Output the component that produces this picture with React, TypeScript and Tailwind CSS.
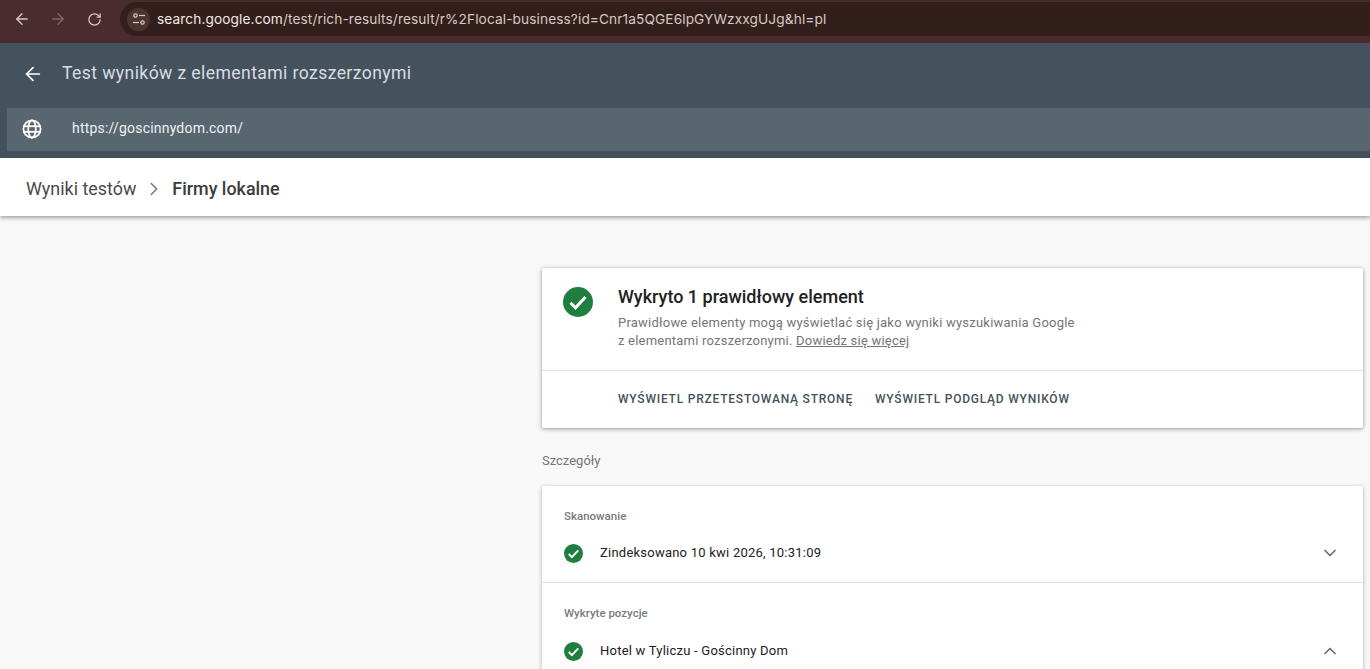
import { ArrowLeft, ArrowRight, ChevronDown, ChevronRight, ChevronUp, RotateCw } from "lucide-react";

function CheckBadge({ size }: { size: number }) {
  return (
    <svg width={size} height={size} viewBox="0 0 24 24" className="shrink-0">
      <circle cx="12" cy="12" r="12" fill="#1e7e3e" />
      <path d="M6 12.6l4 4 8-8.6" fill="none" stroke="#fff" strokeWidth="2.4" />
    </svg>
  );
}

function TuneIcon() {
  return (
    <svg width="14" height="14" viewBox="0 0 14 14" fill="none" stroke="#d8c8c4" strokeWidth="1.2">
      <circle cx="3.5" cy="3.5" r="1.7" />
      <path d="M7 3.5h6" />
      <path d="M1 10.5h6" />
      <circle cx="10.5" cy="10.5" r="1.7" />
    </svg>
  );
}

function GlobeIcon() {
  return (
    <svg width="20" height="20" viewBox="0 0 20 20" fill="none" stroke="#fff" strokeWidth="1.8" className="shrink-0">
      <circle cx="10" cy="10" r="8.6" />
      <ellipse cx="10" cy="10" rx="3.8" ry="8.6" />
      <path d="M1.6 7.2h16.8" />
      <path d="M1.6 12.8h16.8" />
    </svg>
  );
}

function DetailRow({ label, value, open, border }: { label: string; value: string; open?: boolean; border?: boolean }) {
  return (
    <div className={`h-[97px] pl-[22px] pr-[23px] pt-[23px] ${border ? "border-b border-[#dfdfdf]" : ""}`}>
      <div className="text-[11.5px] leading-[14px] font-medium text-[#7b7b7b]">{label}</div>
      <div className={`flex items-center ${open ? "mt-[21px]" : "mt-[20px]"}`}>
        <CheckBadge size={19} />
        <span className="ml-[17px] flex-1 text-[13px] leading-[18px] tracking-[0.23px] text-[#212121]">{value}</span>
        {open ? (
          <ChevronUp size={20} strokeWidth={2} className="text-[#6b6b6b]" />
        ) : (
          <ChevronDown size={20} strokeWidth={2} className="text-[#6b6b6b]" />
        )}
      </div>
    </div>
  );
}

export default function App() {
  return (
    <div className="flex h-[669px] w-full flex-col overflow-hidden bg-[#f8f8f8] font-['Roboto',sans-serif]">
      <div className="flex h-[43px] shrink-0 items-start bg-[#4a2c2e] pt-[2px]">
        <div className="flex h-[34px] w-[120px] shrink-0 items-center pl-[13px] text-[#d8c8c4]">
          <ArrowLeft size={18} strokeWidth={1.8} />
          <ArrowRight size={18} strokeWidth={1.8} className="ml-[18px] text-[#7d6663]" />
          <RotateCw size={15} strokeWidth={2} className="ml-[20px]" />
        </div>
        <div className="flex h-[34px] flex-1 items-center rounded-l-[17px] bg-[#321e1b] pl-[7px]">
          <div className="flex h-[23px] w-[23px] items-center justify-center rounded-full bg-[#4a3532]">
            <TuneIcon />
          </div>
          <div className="ml-[7px] font-['Inter',sans-serif] text-[13.7px] tracking-[0.1px] text-[#d8c8c4]">
            <span className="text-[#f3e9e6]">search.google.com</span>/test/rich-results/result/r%2Flocal-business?id=Cnr1a5QGE6lpGYWzxxgUJg&amp;hl=pl
          </div>
        </div>
      </div>

      <div className="h-[115px] shrink-0 bg-[#44525d]">
        <div className="flex h-[65px] items-center pb-[4px] pl-[22px]">
          <ArrowLeft size={22} strokeWidth={1.8} className="text-white" />
          <span className="ml-[18px] text-[17.6px] tracking-[0.4px] text-[#d9dde0]">Test wyników z elementami rozszerzonymi</span>
        </div>
        <div className="ml-[7px] flex h-[43px] items-center bg-[#58666f] pb-[2px] pl-[15px]">
          <GlobeIcon />
          <span className="ml-[30px] text-[14px] tracking-[0.2px] text-[#f0f2f3]">https://goscinnydom.com/</span>
        </div>
      </div>

      <div className="z-10 flex h-[58px] shrink-0 items-center bg-white pl-[26px] pt-[4px] shadow-[0_2px_4px_rgba(0,0,0,0.35)]">
        <span className="text-[17.9px] text-[#4a4a4a]">Wyniki testów</span>
        <ChevronRight size={22} strokeWidth={1.6} className="ml-[7px] text-[#757575]" />
        <span className="ml-[7px] text-[17.9px] font-medium text-[#3c3c3c]">Firmy lokalne</span>
      </div>

      <div className="ml-[542px] mr-[7px] flex-1 pt-[52px]">
        <div className="h-[160px] rounded-[2px] bg-white shadow-[0_1px_4px_rgba(0,0,0,0.4)]">
          <div className="flex h-[103px] border-b border-[#dfdfdf] pl-[21px] pt-[19px]">
            <CheckBadge size={30} />
            <div className="ml-[25px]">
              <div className="text-[18px] leading-[20px] font-medium text-[#212121]">Wykryto 1 prawidłowy element</div>
              <div className="mt-[7px] text-[13px] leading-[18px] tracking-[0.22px] text-[#757575]">
                Prawidłowe elementy mogą wyświetlać się jako wyniki wyszukiwania Google
                <br />z elementami rozszerzonymi. <span className="underline">Dowiedz się więcej</span>
              </div>
            </div>
          </div>
          <div className="flex h-[57px] items-center gap-[22px] pb-[2px] pl-[76px] text-[12px] font-medium tracking-[0.78px] text-[#44525d]">
            <span>WYŚWIETL PRZETESTOWANĄ STRONĘ</span>
            <span>WYŚWIETL PODGLĄD WYNIKÓW</span>
          </div>
        </div>

        <div className="mt-[24px] text-[13px] leading-[18px] text-[#757575]">Szczegóły</div>

        <div className="mt-[16px] rounded-t-[2px] bg-white shadow-[0_1px_4px_rgba(0,0,0,0.3)]">
          <DetailRow label="Skanowanie" value="Zindeksowano 10 kwi 2026, 10:31:09" border />
          <DetailRow label="Wykryte pozycje" value="Hotel w Tyliczu - Gościnny Dom" open />
        </div>
      </div>
    </div>
  );
}
